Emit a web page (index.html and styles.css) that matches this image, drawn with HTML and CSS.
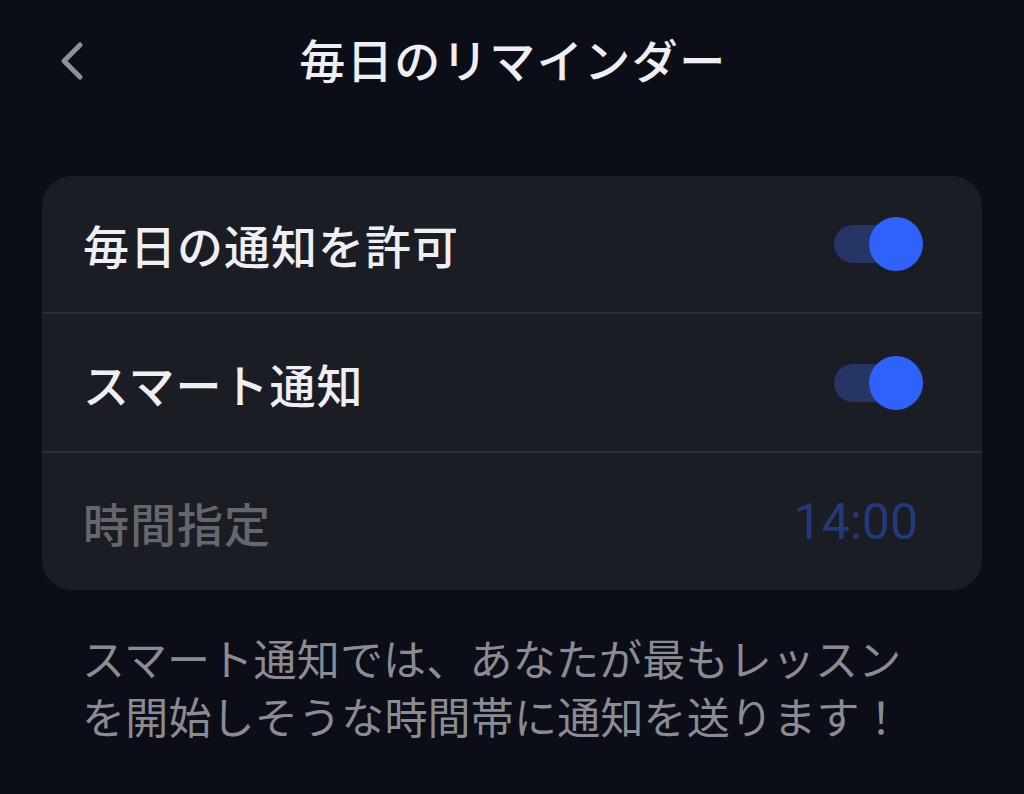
FILE: index.html
```html
<!DOCTYPE html>
<html lang="ja">
<head>
    <meta charset="UTF-8">
    <meta name="viewport" content="width=device-width, initial-scale=1.0">
    <title>毎日のリマインダー</title>
    <link rel="stylesheet" href="styles.css">
</head>
<body>
    <div class="header">
        <a href="#" class="back">
            <svg width="30" height="40" viewBox="0 0 30 40">
                <path d="M24 4 L8 20 L24 36" fill="none" stroke="#8e9097" stroke-width="5" stroke-linecap="round" stroke-linejoin="round"/>
            </svg>
        </a>
        <h1 class="title">毎日のリマインダー</h1>
    </div>
    <div class="card">
        <div class="row">
            <span class="label">毎日の通知を許可</span>
            <div class="toggle on"><span class="knob"></span></div>
        </div>
        <div class="row">
            <span class="label">スマート通知</span>
            <div class="toggle on"><span class="knob"></span></div>
        </div>
        <div class="row disabled">
            <span class="label">時間指定</span>
            <span class="time">14:00</span>
        </div>
    </div>
    <p class="note">スマート通知では、あなたが最もレッスン<br>を開始しそうな時間帯に通知を送ります！</p>
</body>
</html>
```

FILE: styles.css
```css
*{
    margin: 0;
    padding: 0;
    box-sizing: border-box;
}
body{
    width: 1024px;
    height: 794px;
    background-color: #0b0d17;
    font-family: "Noto Sans CJK JP", "Noto Sans", sans-serif;
    color: #eeeff2;
    overflow: hidden;
}
.header{
    position: relative;
    height: 122px;
    display: flex;
    align-items: center;
    justify-content: center;
    padding-bottom: 6px;
}
.back{
    position: absolute;
    left: 56px;
    top: 41px;
    display: block;
    width: 30px;
    height: 40px;
}
.title{
    font-size: 46px;
    font-weight: 500;
    letter-spacing: 1.5px;
    margin-left: 2px;
}
.card{
    margin: 54px 42px 0;
    background-color: #1b1d25;
    border-radius: 30px;
}
.row{
    display: flex;
    align-items: center;
    justify-content: space-between;
    height: 139px;
    padding: 0 72px 0 41px;
    border-top: 2px solid #2c2e36;
}
.row:first-child{
    border-top: none;
    height: 136px;
}
.label{
    font-size: 46px;
    font-weight: 500;
    letter-spacing: 1px;
}
.toggle{
    position: relative;
    width: 76px;
    height: 38px;
    border-radius: 19px;
    background-color: #263566;
}
.knob{
    position: absolute;
    right: -13px;
    top: -8px;
    width: 54px;
    height: 54px;
    border-radius: 50%;
    background-color: #2f62fa;
}
.disabled .label{
    color: #65676e;
}
.time{
    font-family: Roboto, "Noto Sans", sans-serif;
    font-size: 50px;
    color: #22397c;
    margin-right: -8px;
}
.note{
    margin: 38px 60px 0 82px;
    font-size: 43px;
    line-height: 58px;
    color: #8a8c93;
    letter-spacing: 0.2px;
}
```
